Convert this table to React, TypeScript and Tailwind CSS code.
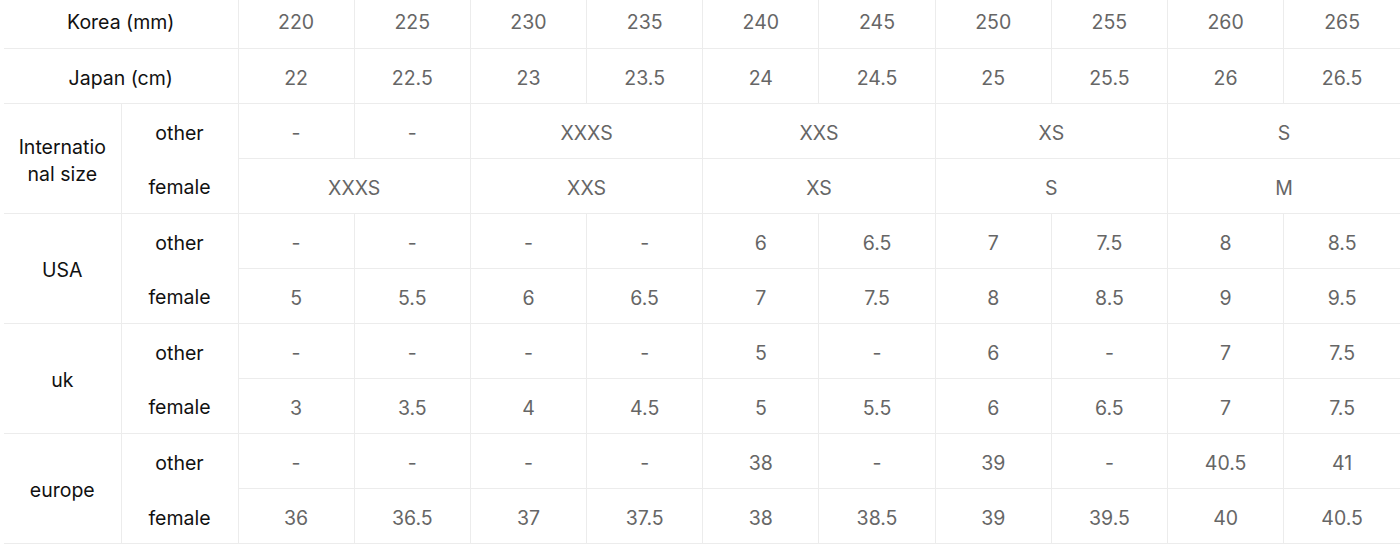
type Cell = { v: string; span?: number }

const korea = ['220', '225', '230', '235', '240', '245', '250', '255', '260', '265']
const japan = ['22', '22.5', '23', '23.5', '24', '24.5', '25', '25.5', '26', '26.5']

const groups: { name: string; other: Cell[]; female: Cell[] }[] = [
  {
    name: 'International size',
    other: [{ v: '-' }, { v: '-' }, { v: 'XXXS', span: 2 }, { v: 'XXS', span: 2 }, { v: 'XS', span: 2 }, { v: 'S', span: 2 }],
    female: [{ v: 'XXXS', span: 2 }, { v: 'XXS', span: 2 }, { v: 'XS', span: 2 }, { v: 'S', span: 2 }, { v: 'M', span: 2 }],
  },
  {
    name: 'USA',
    other: ['-', '-', '-', '-', '6', '6.5', '7', '7.5', '8', '8.5'].map((v) => ({ v })),
    female: ['5', '5.5', '6', '6.5', '7', '7.5', '8', '8.5', '9', '9.5'].map((v) => ({ v })),
  },
  {
    name: 'uk',
    other: ['-', '-', '-', '-', '5', '-', '6', '-', '7', '7.5'].map((v) => ({ v })),
    female: ['3', '3.5', '4', '4.5', '5', '5.5', '6', '6.5', '7', '7.5'].map((v) => ({ v })),
  },
  {
    name: 'europe',
    other: ['-', '-', '-', '-', '38', '-', '39', '-', '40.5', '41'].map((v) => ({ v })),
    female: ['36', '36.5', '37', '37.5', '38', '38.5', '39', '39.5', '40', '40.5'].map((v) => ({ v })),
  },
]

const td = 'h-[55px] border border-[#ececec] text-center align-middle text-[#666] pt-[5px]'
const th = 'h-[55px] border border-[#ececec] text-center align-middle text-[#111] px-2.5 pt-[5px]'

export default function App() {
  return (
    <div className="w-[1400px] h-[546px] overflow-hidden bg-white pl-1" style={{ fontFamily: 'Inter, "Noto Sans", sans-serif' }}>
      <div className="-mt-[7px] border-b border-[#ececec]">
        <table className="w-[1396px] table-fixed border-collapse border-hidden text-[19.5px] leading-[27px]">
          <colgroup>
            <col className="w-[117px]" />
            <col className="w-[117px]" />
          </colgroup>
          <tbody>
            <tr>
              <td colSpan={2} className={th}>Korea (mm)</td>
              {korea.map((v, i) => (
                <td key={i} className={td}>{v}</td>
              ))}
            </tr>
            <tr>
              <td colSpan={2} className={th}>Japan (cm)</td>
              {japan.map((v, i) => (
                <td key={i} className={td}>{v}</td>
              ))}
            </tr>
            {groups.map((g) => (
              <>
                <tr key={g.name + 'o'}>
                  <td rowSpan={2} className={th + ' break-all'}>{g.name}</td>
                  <td className={th + ' border-b-0'}>other</td>
                  {g.other.map((c, i) => (
                    <td key={i} colSpan={c.span} className={td}>{c.v}</td>
                  ))}
                </tr>
                <tr key={g.name + 'f'}>
                  <td className={th + ' border-t-0'}>female</td>
                  {g.female.map((c, i) => (
                    <td key={i} colSpan={c.span} className={td}>{c.v}</td>
                  ))}
                </tr>
              </>
            ))}
          </tbody>
        </table>
      </div>
    </div>
  )
}
